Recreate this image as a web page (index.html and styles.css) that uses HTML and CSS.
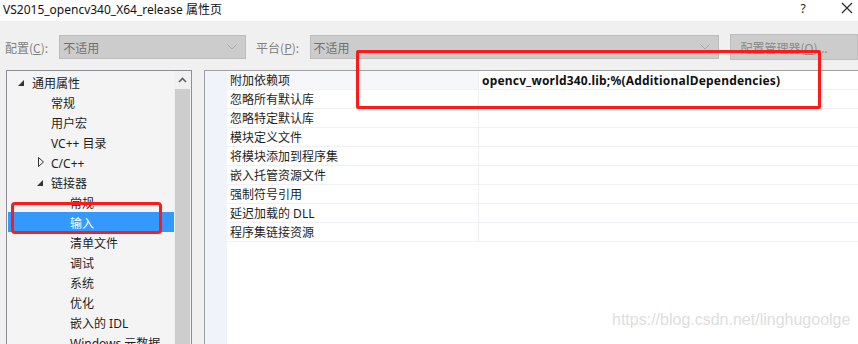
FILE: index.html
```html
<!DOCTYPE html>
<html lang="zh-CN">
<head>
  <meta charset="UTF-8">
  <title>VS2015_opencv340_X64_release 属性页</title>
  <link rel="stylesheet" href="styles.css">
</head>
<body>
  <div class="window">
    <div class="titlebar">
      <span class="title">VS2015_opencv340_X64_release 属性页</span>
      <span class="help">?</span>
      <span class="close">
        <svg width="12" height="12" viewBox="0 0 12 12"><path d="M1 1L11 11M11 1L1 11" stroke="#222" stroke-width="1.1" fill="none"/></svg>
      </span>
    </div>

    <div class="content">
      <div class="toolbar">
        <span class="lbl lbl-config">配置(<u>C</u>):</span>
        <div class="combo combo-config">
          <span>不适用</span>
          <svg class="chev" width="10" height="6" viewBox="0 0 10 6"><path d="M0.5 0.5L5 5L9.5 0.5" stroke="#a8a8a8" fill="none"/></svg>
        </div>
        <span class="lbl lbl-platform">平台(<u>P</u>):</span>
        <div class="combo combo-platform">
          <span>不适用</span>
          <svg class="chev" width="10" height="6" viewBox="0 0 10 6"><path d="M0.5 0.5L5 5L9.5 0.5" stroke="#a8a8a8" fill="none"/></svg>
        </div>
        <div class="mgr">配置管理器(<u>O</u>)...</div>
      </div>

      <div class="panes">
        <div class="tree">
          <ul class="tree-list">
            <li class="lv1"><svg class="exp" width="6" height="6" viewBox="0 0 6 6"><path d="M6 0L6 6L0 6Z" fill="#333"/></svg>通用属性</li>
            <li class="lv2">常规</li>
            <li class="lv2">用户宏</li>
            <li class="lv2">VC++ 目录</li>
            <li class="lv2"><svg class="col" width="6" height="10" viewBox="0 0 6 10"><path d="M0.5 0.5L5.5 5L0.5 9.5Z" stroke="#333" fill="none"/></svg>C/C++</li>
            <li class="lv2"><svg class="exp" width="6" height="6" viewBox="0 0 6 6"><path d="M6 0L6 6L0 6Z" fill="#333"/></svg>链接器</li>
            <li class="lv3">常规</li>
            <li class="lv3 selected">输入</li>
            <li class="lv3">清单文件</li>
            <li class="lv3">调试</li>
            <li class="lv3">系统</li>
            <li class="lv3">优化</li>
            <li class="lv3">嵌入的 IDL</li>
            <li class="lv3">Windows 元数据</li>
          </ul>
          <div class="scrollbar">
            <div class="sb-up">
              <svg width="9" height="6" viewBox="0 0 9 6"><path d="M1 5L4.5 1.5L8 5" stroke="#606060" stroke-width="1.6" fill="none"/></svg>
            </div>
            <div class="sb-thumb"></div>
          </div>
        </div>

        <div class="grid">
          <div class="gutter"></div>
          <div class="rows">
            <div class="row first"><div class="name">附加依赖项</div><div class="value">opencv_world340.lib;%(AdditionalDependencies)</div></div>
            <div class="row"><div class="name">忽略所有默认库</div><div class="value"></div></div>
            <div class="row"><div class="name">忽略特定默认库</div><div class="value"></div></div>
            <div class="row"><div class="name">模块定义文件</div><div class="value"></div></div>
            <div class="row"><div class="name">将模块添加到程序集</div><div class="value"></div></div>
            <div class="row"><div class="name">嵌入托管资源文件</div><div class="value"></div></div>
            <div class="row"><div class="name">强制符号引用</div><div class="value"></div></div>
            <div class="row"><div class="name">延迟加载的 DLL</div><div class="value"></div></div>
            <div class="row"><div class="name">程序集链接资源</div><div class="value"></div></div>
          </div>
        </div>
      </div>
    </div>

    <!-- red annotation boxes drawn over the screenshot -->
    <div class="mark mark-deps"></div>
    <div class="mark mark-input"></div>
    <div class="watermark">https://blog.csdn.net/linghugoolge</div>
  </div>
</body>
</html>
```

FILE: styles.css
```css
body {
  margin: 0;
  font-family: "Noto Sans", "Noto Sans CJK SC", sans-serif;
  font-size: 12px;
  color: #1e1e1e;
}

.window {
  position: relative;
  width: 858px;
  height: 344px;
  overflow: hidden;
  background: #f0f0f0;
}

.titlebar {
  height: 21px;
  background: #fff;
  display: flex;
  align-items: center;
}

.title {
  padding-left: 3px;
  font-size: 12px;
  color: #111;
  flex: 1;
  margin-top: -4px;
}

.help {
  width: 20px;
  margin-right: 23px;
  text-align: center;
  font-size: 12px;
  color: #222;
  margin-top: -4px;
}

.close {
  width: 22px;
  display: flex;
  justify-content: center;
  margin-top: -6px;
}

.toolbar {
  display: flex;
  align-items: center;
  padding: 13px 0 0 5px;
  height: 26px;
}

.lbl {
  color: #808080;
  font-family: "Noto Sans CJK SC", sans-serif;
}

.lbl u {
  text-decoration-thickness: 1px;
}

.lbl-config {
  width: 56px;
}

.lbl-platform {
  width: 55px;
  margin-left: 10px;
}

.combo {
  height: 22px;
  background: #cccccc;
  border: 1px solid #bdbdbd;
  display: flex;
  align-items: center;
  justify-content: space-between;
  padding: 0 8px 0 3px;
  color: #707070;
  font-family: "Noto Sans CJK SC", sans-serif;
  box-sizing: content-box;
}

.combo-config {
  width: 179px;
}

.combo-platform {
  width: 408px;
}

.mgr {
  margin-left: 11px;
  height: 24px;
  width: 120px;
  background: #cccccc;
  border: 1px solid #bdbdbd;
  color: #8a8a8a;
  display: flex;
  align-items: center;
  padding-left: 10px;
  font-family: "Noto Sans CJK SC", sans-serif;
}

.panes {
  display: flex;
  margin-top: 10px;
  padding-left: 6px;
  height: 280px;
}

.tree {
  width: 184px;
  border: 1px solid #8e8f96;
  border-bottom: none;
  background: #f4f4f4;
  display: flex;
}

.tree-list {
  list-style: none;
  margin: 0;
  padding: 1px 0 0 1px;
  flex: 1;
}

.tree-list li {
  height: 20px;
  line-height: 23px;
  position: relative;
  font-family: "Noto Sans", "Noto Sans CJK SC", sans-serif;
  white-space: nowrap;
}

.tree-list .lv1 { padding-left: 24px; }
.tree-list .lv2 { padding-left: 43px; }
.tree-list .lv3 { padding-left: 62px; }

.tree-list svg {
  position: absolute;
}

.lv1 .exp { left: 10px; top: 8px; }
.lv2 .exp { left: 29px; top: 8px; }
.lv2 .col { left: 30px; top: 5px; }

.tree-list .selected {
  background: #3399ff;
  color: #fff;
}

.scrollbar {
  width: 17px;
  background: #f0f0f0;
  display: flex;
  flex-direction: column;
  align-items: center;
}

.sb-up {
  height: 18px;
  width: 17px;
  display: flex;
  align-items: center;
  justify-content: center;
}

.sb-thumb {
  width: 15px;
  flex: 1;
  background: #cdcdcd;
}

.grid {
  margin-left: 12px;
  flex: 1;
  border-left: 1px solid #9d9da6;
  border-top: 1px solid #a0a0a0;
  background: #fff;
  display: flex;
}

.gutter {
  width: 22px;
  background: #f0f4fa;
}

.rows {
  flex: 1;
}

.row {
  display: flex;
  height: 18px;
  border-bottom: 1px solid #f0f0f6;
}

.row .name,
.row .value {
  padding-top: 2px;
  line-height: 16px;
}

.row .name {
  width: 248px;
  padding-left: 3px;
  border-right: 1px solid #f0f0f0;
  font-family: "Noto Sans", "Noto Sans CJK SC", sans-serif;
}

.row.first .name {
  background: #f5f7fb;
}

.row .value {
  flex: 1;
  padding-left: 3px;
  font-weight: bold;
  letter-spacing: 0.2px;
  font-family: "Noto Sans", sans-serif;
  color: #111;
}

.mark {
  position: absolute;
  border: 3px solid #ff1a1a;
  box-sizing: border-box;
}

.mark-deps {
  left: 356px;
  top: 50px;
  width: 465px;
  height: 59px;
  border-radius: 2px;
}

.mark-input {
  left: 11px;
  top: 202px;
  width: 151px;
  height: 32px;
  border-radius: 4px;
}

.watermark {
  position: absolute;
  left: 612px;
  top: 311px;
  font-family: "Liberation Sans", Arial, sans-serif;
  font-size: 16px;
  color: #dedede;
}
```
